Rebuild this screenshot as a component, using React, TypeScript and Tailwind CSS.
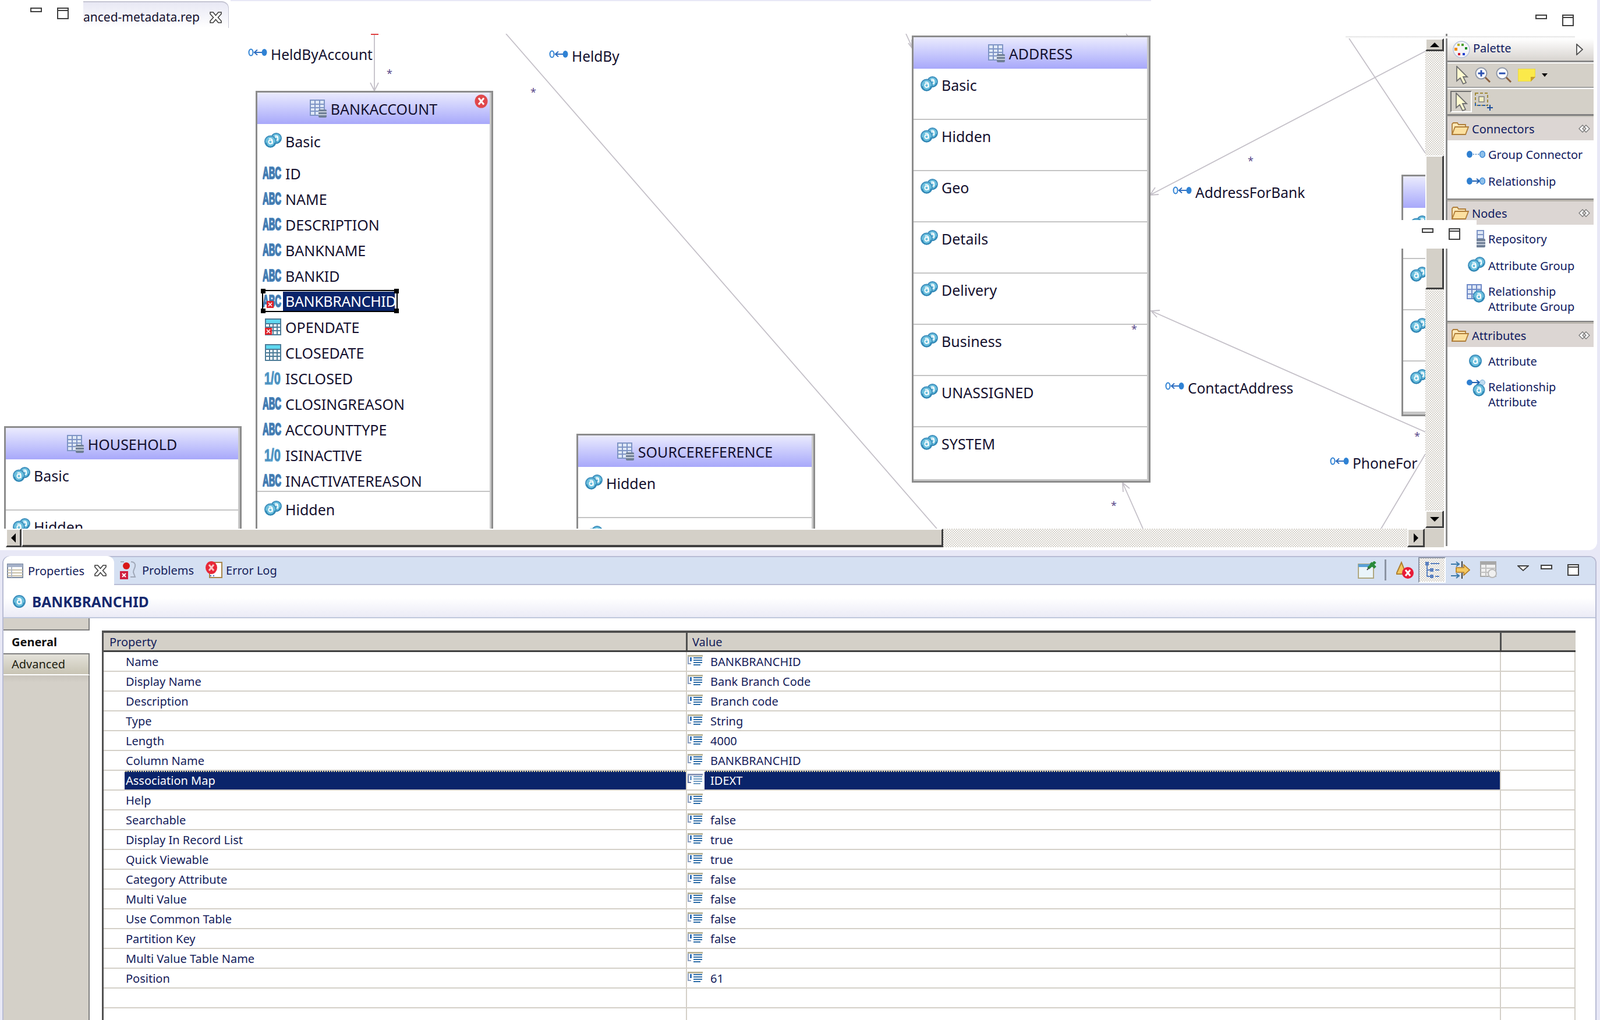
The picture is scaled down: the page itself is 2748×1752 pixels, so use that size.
import React from "react";

const B = "#3f8fbd";
const L = "#6cc0de";

function AGlyph({ x, y, s = 1 }: { x: number; y: number; s?: number }) {
  return (
    <g transform={`translate(${x} ${y}) scale(${s})`} fill="none" stroke="#fff" strokeWidth="1.7">
      <circle cx="0" cy="0.8" r="3" />
      <path d="M-2.6 -4.2 Q2.8 -5.6 3 -1.5 L3 4" />
    </g>
  );
}

function AttrCircle({ cx, cy, r }: { cx: number; cy: number; r: number }) {
  return (
    <g>
      <circle cx={cx} cy={cy} r={r} fill={L} stroke={B} strokeWidth="2" />
      <path d={`M${cx - r + 2} ${cy + 2} A${r - 2} ${r - 2} 0 0 0 ${cx + r - 2} ${cy + 2}`} fill="none" stroke="#2f86b4" strokeWidth="2" />
      <AGlyph x={cx} y={cy} s={r / 9} />
    </g>
  );
}

function GroupIcon() {
  return (
    <svg width="30" height="26" viewBox="0 0 30 26" className="-mt-[5px] shrink-0">
      <AttrCircle cx={20.5} cy={9.5} r={8.5} />
      <AttrCircle cx={10.5} cy={15} r={9.5} />
    </svg>
  );
}

function AttrIcon() {
  return (
    <svg width="32" height="24" viewBox="0 0 32 24" className="shrink-0">
      <AttrCircle cx={15} cy={12} r={10} />
    </svg>
  );
}

function AbcIcon({ bad }: { bad?: boolean }) {
  return (
    <svg width="34" height="34" viewBox="0 0 34 34" className="-my-[5px] -ml-[3px] shrink-0">
      <text x="0" y="13" transform="scale(1 2)" fontFamily="'Liberation Sans',sans-serif" fontWeight="700" fontSize="14.800" fill="#3a6c9e" stroke="#4c86bc" strokeWidth="1.100">ABC</text>
      {bad && <BadX x={7} y={16} />}
    </svg>
  );
}

function BadX({ x, y }: { x: number; y: number }) {
  return (
    <g>
      <rect x={x} y={y} width="12" height="12" fill="#e0242c" />
      <path d={`M${x + 3} ${y + 3}l6 6m0-6l-6 6`} stroke="#fff" strokeWidth="1.6" />
    </g>
  );
}

function BoolIcon() {
  return (
    <svg width="33" height="36" viewBox="0 0 33 36" className="-my-[6px] -ml-[3px] shrink-0">
      <text x="3" y="18.700" transform="scale(1 1.5)" fontFamily="'Liberation Sans',sans-serif" fontWeight="700" fontSize="20" fill="#4585b5" stroke="#5ca4d0" strokeWidth="1">1/0</text>
    </svg>
  );
}

function CalIcon({ bad }: { bad?: boolean }) {
  return (
    <svg width="33" height="30" viewBox="0 0 33 30" className="-my-[2px] -ml-[3px] -mt-[4px] shrink-0">
      <rect x="5" y="2" width="26" height="27" fill="#fff" stroke="#4d7c98" strokeWidth="2" />
      <rect x="6" y="3" width="24" height="6" fill="#5fd8f0" />
      <path d="M5 10h26M5 16h26M5 22h26M12 10v18M18 10v18M25 10v18" stroke="#4d7c98" strokeWidth="2" />
      {bad && <BadX x={4} y={17} />}
    </svg>
  );
}

function TableDbIcon() {
  return (
    <svg width="30" height="32" viewBox="0 0 30 32" className="-mt-[2px] shrink-0">
      <rect x="1" y="1" width="24" height="26" fill="#dfe8f6" stroke="#7f95c5" strokeWidth="2" />
      <path d="M1 8h24M1 14h24M1 20h24M9 1v26M17 1v26" stroke="#7f95c5" strokeWidth="2" />
      <rect x="15" y="17" width="14" height="14" rx="2" fill="#6f7f96" />
      <path d="M15 21h14M15 26h14" stroke="#dfe5ee" strokeWidth="1.6" />
    </svg>
  );
}

function RelHollow() {
  return (
    <svg width="33" height="16" viewBox="0 0 33 16" className="shrink-0">
      <ellipse cx="5" cy="8" rx="3.5" ry="5.5" fill="#fff" stroke="#2f82d4" strokeWidth="2" />
      <path d="M10 8h14M16 3.5l-5 4.5 5 4.5" stroke="#2f6ec0" strokeWidth="2" fill="none" />
      <ellipse cx="28" cy="8" rx="4.5" ry="6" fill="#2f82d4" />
    </svg>
  );
}

function RelPalette() {
  return (
    <svg width="32" height="16" viewBox="0 0 32 16" className="shrink-0">
      <ellipse cx="5" cy="8" rx="5" ry="6" fill="#2f7fd0" />
      <path d="M10 8h12M17 4l5 4-5 4" stroke="#1f5fb0" strokeWidth="2" fill="none" />
      <ellipse cx="27" cy="8" rx="4.5" ry="5.5" fill="#8ec0ea" stroke="#3f8ad8" strokeWidth="1.5" />
    </svg>
  );
}

function GroupConnIcon() {
  return (
    <svg width="32" height="16" viewBox="0 0 32 16" className="shrink-0">
      <ellipse cx="5" cy="8" rx="5" ry="6" fill="#2f7fd0" />
      <path d="M11 8h2M15 8h2M19 8h2" stroke="#3f7fc0" strokeWidth="1.5" />
      <ellipse cx="27" cy="8" rx="4.5" ry="5.5" fill="#8ec0ea" stroke="#3f8ad8" strokeWidth="1.5" />
    </svg>
  );
}

function MinIcon() {
  return <div className="h-[8px] w-[20px] shrink-0 border-2 border-[#404040] bg-white" />;
}

function MaxIcon() {
  return (
    <div className="h-[20px] w-[20px] shrink-0 border-2 border-[#404040] bg-white">
      <div className="h-[4px] border-b-2 border-[#404040]" />
    </div>
  );
}

function CloseIcon() {
  return (
    <svg width="23" height="20" viewBox="0 0 23 20" className="shrink-0">
      <path d="M2 1h5l4.500 5.500L16 1h5v3l-5.500 6 5.500 6v3h-5l-4.500-5.500L7 19H2v-3l5.500-6L2 4z" fill="#fff" stroke="#3c3c3c" strokeWidth="1.6" />
    </svg>
  );
}

function ErrorBadge() {
  return (
    <svg width="23" height="24" viewBox="0 0 23 24">
      <ellipse cx="11.500" cy="12" rx="11" ry="11.500" fill="#e0484c" />
      <path d="M7 6.500l9 11m0-11l-9 11" stroke="#fff" strokeWidth="3" />
    </svg>
  );
}

function Folder() {
  return (
    <svg width="30" height="24" viewBox="0 0 30 24" className="shrink-0">
      <path d="M1 22V4l2-2h7l2 3h12v4" fill="#fbe8b8" stroke="#b07e3a" strokeWidth="1.8" />
      <path d="M1 22l5-13h23l-5 13z" fill="#fce0a0" stroke="#b07e3a" strokeWidth="1.8" />
    </svg>
  );
}

function Collapse() {
  return (
    <svg width="20" height="14" viewBox="0 0 20 14" className="shrink-0">
      <path d="M7 1L1 7l6 6 3-3-3-3 3-3zM13 1l6 6-6 6-3-3 3-3-3-3z" fill="#fff" stroke="#777" strokeWidth="1.3" />
    </svg>
  );
}

function PaletteIcon() {
  return (
    <svg width="30" height="30" viewBox="0 0 30 30" className="shrink-0">
      <circle cx="15" cy="15" r="14" fill="#f4f4f8" stroke="#b8c4dc" strokeWidth="1.5" />
      <rect x="8" y="5" width="4" height="4" fill="#b8b020" />
      <rect x="15" y="5" width="4" height="4" fill="#4aa030" />
      <rect x="3" y="12" width="5" height="5" fill="#f08a10" />
      <rect x="21" y="11" width="4" height="4" fill="#108a20" />
      <rect x="9" y="21" width="4" height="4" fill="#d02030" />
      <rect x="17" y="21" width="4" height="4" fill="#2040d0" />
    </svg>
  );
}

function Cursor() {
  return (
    <svg width="22" height="32" viewBox="0 0 22 32" className="shrink-0">
      <path d="M2 1v25l6-5 5 10 5-2-5-10h7z" fill="#fffbd0" stroke="#707070" strokeWidth="1.8" />
    </svg>
  );
}

function Zoom({ plus }: { plus?: boolean }) {
  return (
    <svg width="28" height="28" viewBox="0 0 28 28" className="shrink-0">
      <circle cx="11" cy="11" r="9.500" fill="#fff" stroke="#9098a8" strokeWidth="2" />
      <path d="M18 18l8 8" stroke="#8a6040" strokeWidth="3" />
      <path d={plus ? "M5.500 11h11M11 5.500v11" : "M5.500 11h11"} stroke="#2a50b0" strokeWidth="3" />
    </svg>
  );
}

function Note() {
  return (
    <svg width="30" height="22" viewBox="0 0 30 22" className="shrink-0">
      <path d="M0 0h30v14l-8 8H0z" fill="#fbe94a" stroke="#d8c840" strokeWidth="1" />
      <path d="M30 14h-8v8z" fill="#c8a030" />
    </svg>
  );
}

function Marquee() {
  return (
    <svg width="32" height="32" viewBox="0 0 32 32" className="shrink-0">
      <rect x="1" y="1" width="21" height="21" fill="none" stroke="#a08a3a" strokeWidth="2" strokeDasharray="5 3" />
      <path d="M1 18v4h21" fill="none" stroke="#2a60a8" strokeWidth="2" strokeDasharray="5 3" />
      <rect x="7" y="7" width="9" height="9" fill="#f4f0c0" stroke="#808080" strokeWidth="1.5" />
      <path d="M26 21v10M21 26h10" stroke="#1f4f9a" strokeWidth="2" />
    </svg>
  );
}

function Repo() {
  return (
    <svg width="32" height="30" viewBox="0 0 32 30" className="shrink-0">
      <path d="M18 1h11v14H18zM18 8h11" fill="#dfe8f6" stroke="#7f95c5" strokeWidth="2" />
      <rect x="16" y="15" width="16" height="15" rx="2" fill="#6f7f96" />
      <path d="M16 20h16M16 25h16" stroke="#dfe5ee" strokeWidth="1.600" />
    </svg>
  );
}

function RelAttrGroup() {
  return (
    <svg width="32" height="32" viewBox="0 0 32 32" className="shrink-0">
      <rect x="1" y="1" width="24" height="24" fill="#dfe8f6" stroke="#6f8ac8" strokeWidth="2" />
      <path d="M1 9h24M1 17h24M9 1v24M17 1v24" stroke="#6f8ac8" strokeWidth="2" />
      <AttrCircle cx={21} cy={21} r={9.500} />
    </svg>
  );
}

function RelAttr() {
  return (
    <svg width="32" height="30" viewBox="0 0 32 30" className="shrink-0">
      <circle cx="5" cy="5" r="5" fill="#2f7fd0" />
      <path d="M9 5h14M17 1l5 4-5 4" stroke="#1f5fb0" strokeWidth="2" fill="none" />
      <circle cx="27" cy="5" r="4.500" fill="#c0dcf0" stroke="#7ab0d8" />
      <AttrCircle cx={21} cy={18} r={9.500} />
    </svg>
  );
}

function PropIcon({ dim }: { dim?: boolean }) {
  return (
    <svg width="26" height="19" viewBox="0 0 26 19" className={dim ? "shrink-0 -mt-[4px] opacity-70" : "shrink-0 -mt-[4px]"}>
      <rect x="0" y="0" width="26" height="3" fill={dim ? "#5a6a9a" : "#b9b498"} />
      <path d="M1 3v12h5" fill="none" stroke={dim ? "#26407e" : "#8a9ec0"} strokeWidth="2" />
      <rect x="4" y="4" width="3" height="7" fill="#2f70b8" />
      <path d="M10 5h15M10 9h15M10 13h15M10 17h12" stroke="#2f6ea8" strokeWidth="2" />
    </svg>
  );
}

function GroupRow({ label }: { label: string }) {
  return (
    <div className="flex h-[26px] items-center gap-[6px] pl-[12px]">
      <GroupIcon />
      <span className="pt-[2px]">{label}</span>
    </div>
  );
}

function Section({ label }: { label: string }) {
  return (
    <div className="h-[88px] border-b-2 border-[#c4c4c4] pt-[15px]">
      <GroupRow label={label} />
    </div>
  );
}

function FieldRow({ icon, label }: { icon: React.ReactNode; label: string }) {
  return (
    <div className="flex h-[44px] items-center gap-[6px] pl-[12px]">
      <div className="flex w-[30px] shrink-0 items-center">{icon}</div>
      <span className="pt-[1px]">{label}</span>
    </div>
  );
}

function Node({ pos, title, children, badge }: { pos: string; title?: string; children: React.ReactNode; badge?: boolean }) {
  return (
    <div className={`absolute border-[3px] border-[#8c8c8c] bg-white text-[25px] text-[#14102e] ${pos}`}>
      <div className="relative h-full border-r-[3px] border-b-[3px] border-[#c8c8c8]">
        <div className="flex h-[54px] items-center justify-center gap-[6px] bg-linear-to-b from-[#ebebfd] to-[#a8a8fa] pt-[4px]">
          {title && <TableDbIcon />}
          {title && <span>{title}</span>}
        </div>
        {badge && (
          <div className="absolute top-[3px] right-[3px]">
            <ErrorBadge />
          </div>
        )}
        {children}
      </div>
    </div>
  );
}

function Label({ pos, text }: { pos: string; text: string }) {
  return (
    <div className={`absolute flex h-[26px] items-center gap-[6px] text-[24.5px] text-[#14102e] ${pos}`}>
      <div className="-mt-[6px]">
        <RelHollow />
      </div>
      <span className="pt-[2px]">{text}</span>
    </div>
  );
}

function Star({ pos }: { pos: string }) {
  return <span className={`absolute text-[18px] leading-[24px] text-[#5a4a8a] ${pos}`}>*</span>;
}

function Bevel({ dir, cls }: { dir: "up" | "down" | "left" | "right"; cls: string }) {
  const p = { up: "M8 0l8 8H0z", down: "M0 0h16l-8 8z", left: "M8 0v16L0 8z", right: "M0 0l8 8-8 8z" }[dir];
  const small = dir === "up" || dir === "down";
  return (
    <div className={`flex shrink-0 items-center justify-center border-t-2 border-l-2 border-t-white border-l-white border-r-[3px] border-b-[3px] border-r-[#404040] border-b-[#404040] bg-[#d4d0c8] ${cls}`}>
      <svg width={small ? 16 : 8} height={small ? 8 : 16} viewBox={small ? "0 0 16 8" : "0 0 8 16"}>
        <path d={p} fill="#000" />
      </svg>
    </div>
  );
}

const dither = "bg-[image:repeating-conic-gradient(#d4d0c8_0%_25%,#ffffff_0%_50%)] bg-[length:4px_4px]";

function PaletteHead({ label }: { label: string }) {
  return (
    <div className="flex h-[40px] shrink-0 items-center bg-[#dcd6d3] pr-[6px] pl-[7px] text-[#101a60]">
      <Folder />
      <span className="ml-[5px] pt-[2px]">{label}</span>
      <div className="ml-auto">
        <Collapse />
      </div>
    </div>
  );
}

function PaletteItem({ icon, lines }: { icon: React.ReactNode; lines: string[] }) {
  return lines.length === 1 ? (
    <div className="flex h-[46px] items-center text-[#101a60]">
      <div className="flex w-[65px] shrink-0 justify-end">{icon}</div>
      <span className="ml-[5px] pt-[1px]">{lines[0]}</span>
    </div>
  ) : (
    <div className="flex pt-[9px] leading-[26px] text-[#101a60]">
      <div className="flex w-[65px] shrink-0 justify-end">{icon}</div>
      <div className="ml-[5px]">
        <div>{lines[0]}</div>
        <div>{lines[1]}</div>
      </div>
    </div>
  );
}

const rows: [string, string][] = [
  ["Name", "BANKBRANCHID"],
  ["Display Name", "Bank Branch Code"],
  ["Description", "Branch code"],
  ["Type", "String"],
  ["Length", "4000"],
  ["Column Name", "BANKBRANCHID"],
  ["Association Map", "IDEXT"],
  ["Help", ""],
  ["Searchable", "false"],
  ["Display In Record List", "true"],
  ["Quick Viewable", "true"],
  ["Category Attribute", "false"],
  ["Multi Value", "false"],
  ["Use Common Table", "false"],
  ["Partition Key", "false"],
  ["Multi Value Table Name", ""],
  ["Position", "61"],
];

const fields: [string, string][] = [
  ["abc", "ID"],
  ["abc", "NAME"],
  ["abc", "DESCRIPTION"],
  ["abc", "BANKNAME"],
  ["abc", "BANKID"],
  ["sel", "BANKBRANCHID"],
  ["calbad", "OPENDATE"],
  ["cal", "CLOSEDATE"],
  ["bool", "ISCLOSED"],
  ["abc", "CLOSINGREASON"],
  ["abc", "ACCOUNTTYPE"],
  ["bool", "ISINACTIVE"],
  ["abc", "INACTIVATEREASON"],
];

function Handle({ pos }: { pos: string }) {
  return <div className={`absolute h-[8px] w-[8px] bg-black ${pos}`} />;
}

export default function App() {
  return (
    <div className="relative flex h-[1752px] w-[2748px] flex-col overflow-hidden bg-[#e8e8f6] [font-family:'DejaVu_Sans_Condensed','Liberation_Sans',sans-serif]">
      {/* editor area */}
      <div className="mr-[5px] flex h-[945px] shrink-0 flex-col rounded-br-[14px] bg-white">
        <div className="relative flex h-[58px] shrink-0 items-start">
          <div className="absolute top-0 left-[396px] h-[2px] w-[1581px] bg-[#e8e8f6]" />
          <div className="flex w-[143px] shrink-0 gap-[26px] pt-[13px] pl-[52px]">
            <MinIcon />
            <MaxIcon />
          </div>
          <div className="mt-[2px] flex h-[46px] w-[250px] items-center gap-[16px] rounded-tr-[12px] border-t-2 border-r border-[#c4c4d2] bg-linear-to-b from-[#e8e8f4] to-white pt-[8px] text-[21px] text-[#14102e]">
            <span>anced-metadata.rep</span>
            <CloseIcon />
          </div>
          <div className="ml-auto flex gap-[26px] pt-[25px] pr-[40px]">
            <MinIcon />
            <MaxIcon />
          </div>
          <div className="absolute top-[62px] left-[2311px] z-10 h-[4px] w-[394px] bg-linear-to-b from-[#e4e4e4] to-white" />
        </div>

        <div className="flex min-h-0 flex-1">
          <div className="flex w-[2480px] shrink-0 flex-col">
            <div className="flex h-[850px] shrink-0">
              {/* free canvas */}
              <div className="relative w-[2448px] shrink-0 overflow-hidden">
                <svg width="2448" height="850" viewBox="0 58 2448 850" className="absolute top-0 left-0" fill="none" stroke="#c4c0c8" strokeWidth="1.800">
                  <path d="M643 58V156M636 142l7 14 7-14" />
                  <path d="M637 59h13" stroke="#e04040" strokeWidth="2" />
                  <path d="M869 58L1609 908" />
                  <path d="M1556 58l11 24M1566 68v14l-6-8" />
                  <path d="M1934 58l3 4" />
                  <path d="M1975 335L2448 88M1990 334l-15 1 9-13" />
                  <path d="M2317 66L2448 263" />
                  <path d="M1977 534L2448 742M1992 533l-15 1 10 11" />
                  <path d="M2448 780L2372 908" />
                  <path d="M1928 829L1963 908M1929 845l-1-16 12 10" />
                </svg>

                <Node pos="top-[98px] left-[439px] h-[900px] w-[408px]" title="BANKACCOUNT" badge>
                  <div className="pt-[17px]">
                    <GroupRow label="Basic" />
                  </div>
                  <div className="mt-[20px] h-[569px] border-b-2 border-[#c4c4c4]">
                    {fields.map(([k, t]) =>
                      k === "sel" ? (
                        <div key={t} className="relative flex h-[44px] items-center gap-[6px] pl-[12px]">
                          <div className="flex w-[30px] shrink-0 items-center">
                            <AbcIcon bad />
                          </div>
                          <span className="-ml-[4px] flex h-[34px] w-[192px] shrink-0 items-center bg-[#0a246a] pl-[4px] tracking-[-0.35px] text-white">{t}</span>
                          <div className="absolute top-[2px] left-[13px] h-[2px] w-[223px] bg-black" />
                          <div className="absolute top-[38px] left-[13px] h-[2px] w-[223px] bg-black" />
                          <div className="absolute top-[6px] left-[8px] h-[32px] w-[2px] bg-black" />
                          <div className="absolute top-[6px] left-[239px] h-[32px] w-[2px] bg-black" />
                          <Handle pos="top-0 left-[6px]" />
                          <Handle pos="top-0 left-[235px]" />
                          <Handle pos="top-[34px] left-[6px]" />
                          <Handle pos="top-[34px] left-[235px]" />
                        </div>
                      ) : (
                        <FieldRow
                          key={t}
                          label={t}
                          icon={k === "abc" ? <AbcIcon /> : k === "bool" ? <BoolIcon /> : <CalIcon bad={k === "calbad"} />}
                        />
                      ),
                    )}
                  </div>
                  <div className="pt-[17px]">
                    <GroupRow label="Hidden" />
                  </div>
                </Node>

                <Node pos="top-[674px] left-[7px] h-[300px] w-[408px]" title="HOUSEHOLD">
                  <Section label="Basic" />
                  <Section label="Hidden" />
                </Node>

                <Node pos="top-[687px] left-[990px] h-[300px] w-[410px]" title="SOURCEREFERENCE">
                  <Section label="Hidden" />
                  <Section label="" />
                </Node>

                <Node pos="top-[3px] left-[1566px] h-[768px] w-[410px]" title="ADDRESS">
                  <Section label="Basic" />
                  <Section label="Hidden" />
                  <Section label="Geo" />
                  <Section label="Details" />
                  <Section label="Delivery" />
                  <Section label="Business" />
                  <Section label="UNASSIGNED" />
                  <div className="pt-[15px]">
                    <GroupRow label="SYSTEM" />
                  </div>
                </Node>

                <Node pos="top-[242px] left-[2407px] h-[415px] w-[200px]">
                  <Section label="" />
                  <Section label="" />
                  <Section label="" />
                  <Section label="" />
                </Node>

                <Label pos="top-[22px] left-[426px]" text="HeldByAccount" />
                <Label pos="top-[25px] left-[943px]" text="HeldBy" />
                <Label pos="top-[259px] left-[2014px]" text="AddressForBank" />
                <Label pos="top-[595px] left-[2001px]" text="ContactAddress" />
                <Label pos="top-[724px] left-[2284px]" text="PhoneFor" />

                <Star pos="top-[56px] left-[664px]" />
                <Star pos="top-[88px] left-[911px]" />
                <Star pos="top-[206px] left-[2143px]" />
                <Star pos="top-[495px] left-[1943px]" />
                <Star pos="top-[679px] left-[2429px]" />
                <Star pos="top-[798px] left-[1908px]" />
              </div>

              {/* vertical scrollbar */}
              <div className="flex w-[32px] shrink-0 flex-col pb-[1px]">
                <div className="h-[8px] shrink-0 bg-white" />
                <Bevel dir="up" cls="h-[22px]" />
                <div className={`h-[179px] shrink-0 ${dither}`} />
                <div className="h-[230px] shrink-0 border-t-2 border-l-2 border-t-white border-l-white border-r-[3px] border-b-[3px] border-r-[#404040] border-b-[#404040] bg-[#d4d0c8]" />
                <div className={`min-h-0 flex-1 ${dither}`} />
                <Bevel dir="down" cls="h-[30px]" />
              </div>
            </div>

            {/* horizontal scrollbar */}
            <div className="flex h-[32px] shrink-0 pl-[10px]">
              <Bevel dir="left" cls="h-full w-[27px]" />
              <div className="h-full w-[1583px] shrink-0 border-t-2 border-l-2 border-t-white border-l-white border-r-[3px] border-b-[4px] border-r-[#404040] border-b-[#404040] bg-[#d4d0c8]" />
              <div className={`h-full min-w-0 flex-1 ${dither}`} />
              <Bevel dir="right" cls="h-full w-[30px]" />
              <div className="h-full w-[33px] shrink-0 bg-[#d4d0c8]" />
            </div>
          </div>

          <div className="h-[880px] w-[6px] shrink-0 border-r-[3px] border-[#8a8a8a] bg-white" />

          {/* palette */}
          <div className="flex w-[251px] shrink-0 flex-col text-[20px]">
            <div className="h-[8px] shrink-0" />
            <div className="flex h-[38px] shrink-0 items-center bg-linear-to-b from-white to-[#d8d4d0] pr-[18px] pl-[9px] text-[#101a60]">
              <PaletteIcon />
              <span className="ml-[5px] -mt-[4px]">Palette</span>
              <svg width="12" height="20" viewBox="0 0 12 20" className="ml-auto">
                <path d="M1 1l10 9-10 9z" fill="#fff" stroke="#505050" strokeWidth="1.800" />
              </svg>
            </div>
            <div className="h-[3px] shrink-0 bg-[#8a8a8a]" />
            <div className="h-[2px] shrink-0" />
            <div className="flex h-[42px] shrink-0 items-center gap-[11px] border-b-2 border-[#a0a0a0] bg-[#d4d0c8] pl-[14px]">
              <Cursor />
              <Zoom plus />
              <div className="-ml-[3px]">
                <Zoom />
              </div>
              <div className="-ml-[1px]">
                <Note />
              </div>
              <svg width="10" height="6" viewBox="0 0 10 6" className="ml-0">
                <path d="M0 0h10L5 6z" fill="#000" />
              </svg>
            </div>
            <div className="h-[2px] shrink-0" />
            <div className="flex h-[43px] shrink-0 items-center gap-[5px] bg-[#d4d0c8] pl-[5px]">
              <div className="flex h-[37px] w-[37px] items-center justify-center border-t-2 border-l-2 border-t-[#707070] border-l-[#707070] border-r-2 border-b-2 border-r-white border-b-white">
                <Cursor />
              </div>
              <Marquee />
            </div>
            <div className="h-[3px] shrink-0 bg-[#808080]" />
            <div className="h-[2px] shrink-0 bg-[#c8c4bc]" />
            <PaletteHead label="Connectors" />
            <div className="h-[100px] shrink-0 pt-[1px]">
              <PaletteItem icon={<GroupConnIcon />} lines={["Group Connector"]} />
              <PaletteItem icon={<RelPalette />} lines={["Relationship"]} />
            </div>
            <div className="h-[2px] shrink-0 bg-[#808080]" />
            <div className="h-[3px] shrink-0 bg-[#b8b4ac]" />
            <PaletteHead label="Nodes" />
            <div className="h-[165px] shrink-0 pt-[1px]">
              <PaletteItem icon={<Repo />} lines={["Repository"]} />
              <PaletteItem icon={<GroupIcon />} lines={["Attribute Group"]} />
              <PaletteItem icon={<RelAttrGroup />} lines={["Relationship", "Attribute Group"]} />
            </div>
            <div className="h-[2px] shrink-0 bg-[#808080]" />
            <div className="h-[3px] shrink-0 bg-[#b8b4ac]" />
            <PaletteHead label="Attributes" />
            <div className="pt-[1px]">
              <PaletteItem icon={<AttrIcon />} lines={["Attribute"]} />
              <PaletteItem icon={<RelAttr />} lines={["Relationship", "Attribute"]} />
            </div>
          </div>
        </div>
      </div>

      {/* properties view */}
      <div className="mt-[10px] mr-[6px] ml-[4px] flex min-h-0 flex-1 flex-col rounded-t-[12px] border-x-2 border-t-2 border-[#b8bcd4] bg-white text-[20px] text-[#14205a]">
        <div className="flex h-[48px] shrink-0 items-end rounded-t-[10px] border-b-2 border-[#b8bcd4] bg-[#d5e0f2]">
          <div className="-mb-[2px] flex h-[50px] w-[190px] shrink-0 items-center rounded-t-[12px] bg-white pl-[6px]">
            <svg width="28" height="25" viewBox="0 0 28 25" className="shrink-0">
              <rect x="1" y="1" width="26" height="23" fill="#fff" stroke="#7a88a0" strokeWidth="2" />
              <rect x="1" y="1" width="26" height="5" fill="#a4b0c8" />
              <path d="M1 11h26M1 16h26M1 21h26" stroke="#c8c0a8" strokeWidth="2" />
              <path d="M8 6v18" stroke="#b0b8c8" strokeWidth="2" />
            </svg>
            <span className="ml-[8px] pt-[2px]">Properties</span>
            <div className="ml-auto pr-[12px]">
              <CloseIcon />
            </div>
          </div>
          <div className="flex h-[48px] items-center pl-[9px]">
            <svg width="30" height="32" viewBox="0 0 30 32" className="shrink-0">
              <rect x="1" y="18" width="14" height="14" fill="#d02040" />
              <path d="M5 22l6 6m0-6l-6 6" stroke="#fff" strokeWidth="2" />
              <circle cx="12" cy="9" r="6" fill="#d81818" />
              <path d="M2 2h6M20 2c6 0 8 4 7 8s-3 6-3 10l3 8h-8" fill="none" stroke="#a0a8b8" strokeWidth="2" />
            </svg>
            <span className="ml-[9px] pt-[2px]">Problems</span>
            <svg width="30" height="32" viewBox="0 0 30 32" className="ml-[19px] shrink-0">
              <rect x="8" y="3" width="21" height="26" fill="#fff" stroke="#a8864a" strokeWidth="2" />
              <ellipse cx="11" cy="12" rx="10" ry="11" fill="#e82838" />
              <path d="M7 7l8 10m0-10l-8 10" stroke="#f8c8c8" strokeWidth="3" />
              <path d="M9 26h2M14 26h2" stroke="#4070c0" strokeWidth="2" />
            </svg>
            <span className="ml-[6px] pt-[2px]">Error Log</span>
          </div>
          <div className="ml-auto flex h-[48px] items-center pr-[28px]">
            <svg width="32" height="30" viewBox="0 0 32 30" className="shrink-0">
              <rect x="1" y="5" width="26" height="24" fill="#eaf4fa" stroke="#b0a880" strokeWidth="2" />
              <rect x="1" y="5" width="26" height="5" fill="#5aa0d8" />
              <path d="M18 12L30 1M22 3l8 8" stroke="#2a8a3a" strokeWidth="5" />
              <path d="M19 11l-3 4" stroke="#404040" strokeWidth="2" />
            </svg>
            <div className="ml-[14px] h-[36px] w-[3px] bg-[#8c94a4]" />
            <svg width="30" height="30" viewBox="0 0 30 30" className="ml-[17px] shrink-0">
              <path d="M9 2l8 20H0z" fill="#f2c860" stroke="#b08030" strokeWidth="2" />
              <circle cx="20" cy="20" r="10" fill="#e81c38" />
              <path d="M16 15l8 10m0-10l-8 10" stroke="#fff" strokeWidth="3" />
            </svg>
            <div className={`ml-[8px] flex h-[44px] w-[47px] items-center justify-center border-t-2 border-l-2 border-t-[#8c94a4] border-l-[#8c94a4] border-r-2 border-b-2 border-r-white border-b-white ${dither}`}>
              <svg width="24" height="28" viewBox="0 0 24 28">
                <rect x="0" y="0" width="6" height="6" fill="#5a80c0" />
                <rect x="8" y="11" width="6" height="6" fill="#5a80c0" />
                <rect x="8" y="22" width="6" height="6" fill="#5a80c0" />
                <path d="M3 6v19h5M3 14h5M9 3h15M17 14h7M17 25h7" fill="none" stroke="#5a80c0" strokeWidth="2" />
              </svg>
            </div>
            <svg width="33" height="30" viewBox="0 0 33 30" className="ml-[9px] shrink-0">
              <path d="M0 5h14M9 1l5 4-5 4M0 25h14M9 21l5 4-5 4" fill="none" stroke="#3a78a8" strokeWidth="2" />
              <path d="M19 0v10M19 20v10" stroke="#404040" strokeWidth="2" />
              <path d="M9 11h13V6l10 9-10 9v-5H9z" fill="#f4c860" stroke="#b07820" strokeWidth="1.600" />
            </svg>
            <svg width="30" height="30" viewBox="0 0 30 30" className="ml-[17px] shrink-0">
              <rect x="1" y="1" width="26" height="25" fill="#f0f0f0" stroke="#a8a8a8" strokeWidth="2" />
              <rect x="1" y="1" width="26" height="5" fill="#a8a8a8" />
              <path d="M1 12h26M1 19h26M10 6v20" stroke="#c0c0c0" strokeWidth="2" />
              <circle cx="21" cy="21" r="7" fill="#f0f0f0" stroke="#b8b8b8" strokeWidth="2" />
            </svg>
            <svg width="20" height="10" viewBox="0 0 20 10" className="ml-[34px] shrink-0 -mt-[6px]">
              <path d="M1 1h18L10 9z" fill="#fff" stroke="#404040" strokeWidth="1.800" />
            </svg>
            <div className="ml-[20px] -mt-[10px]">
              <MinIcon />
            </div>
            <div className="ml-[26px]">
              <MaxIcon />
            </div>
          </div>
        </div>

        <div className="flex h-[57px] shrink-0 items-center border-b-2 border-[#c0c8dc] bg-linear-to-b from-white from-40% to-[#ebebf6] pl-[12px]">
          <AttrIcon />
          <span className="ml-[5px] pt-[4px] text-[24.5px] font-bold text-[#14286e]">BANKBRANCHID</span>
        </div>

        <div className="flex min-h-0 flex-1">
          <div className="flex w-[148px] shrink-0 flex-col bg-[#d4d0c8]">
            <div className="h-[21px] shrink-0 border-r-2 border-b-2 border-[#808080]" />
            <div className="flex h-[39px] shrink-0 items-center bg-white pl-[14px] font-bold text-[#101010]">General</div>
            <div className="flex h-[38px] shrink-0 items-center border-t-2 border-r-2 border-b-2 border-t-[#808080] border-r-[#808080] border-b-white bg-linear-to-b from-[#e4e2da] to-[#c8c4b4] pl-[14px] text-[#202010]">Advanced</div>
            <div className="min-h-0 flex-1 border-r-2 border-[#808080] bg-linear-to-b from-[#c8c4bc] from-0% to-[#d4d0c8] to-2%" />
          </div>

          <div className="mt-[21px] ml-[21px] flex w-[2531px] shrink-0 flex-col overflow-hidden border-t-[4px] border-l-[3px] border-[#505050] text-[20px]">
            <div className="flex h-[33px] shrink-0 border-b-[3px] border-[#404040] bg-[#d4d0c8]">
              <div className="flex w-[1000px] shrink-0 items-center pt-[2px] pl-[10px]">Property</div>
              <div className="flex w-[1398px] shrink-0 items-center border-l-[3px] border-l-[#505050] pt-[2px] pl-[8px]">Value</div>
              <div className="flex-1 border-l-[3px] border-l-[#505050]" />
            </div>
            {rows.map(([name, val]) => {
              const sel = name === "Association Map";
              return (
                <div key={name} className="flex h-[34px] shrink-0 border-b-2 border-[#d4d0c8]">
                  <div className="flex w-[1000px] shrink-0 pl-[36px]">
                    <div className={sel ? "flex flex-1 items-center border-t-2 border-dotted border-t-[#f0e0a0] bg-[#0a246a] pl-[2px] text-white" : "flex flex-1 items-center pt-[2px] pl-[2px]"}>{name}</div>
                  </div>
                  <div className="flex w-[1398px] shrink-0 border-l-2 border-[#d4d0c8]">
                    <div className="flex w-[30px] shrink-0 items-center pl-[1px]">
                      <PropIcon dim={sel} />
                    </div>
                    <div className={sel ? "flex flex-1 items-center border-t-2 border-dotted border-t-[#f0e0a0] bg-[#0a246a] pl-[10px] text-white" : "flex flex-1 items-center pt-[2px] pl-[10px]"}>{val}</div>
                  </div>
                  <div className="flex-1 border-x-2 border-[#d4d0c8]" />
                </div>
              );
            })}
            <div className="flex h-[34px] shrink-0 border-b-2 border-[#d4d0c8]">
              <div className="w-[1000px] shrink-0" />
              <div className="w-[1398px] shrink-0 border-l-2 border-[#d4d0c8]" />
              <div className="flex-1 border-x-2 border-[#d4d0c8]" />
            </div>
            <div className="flex min-h-0 flex-1">
              <div className="w-[1000px] shrink-0" />
              <div className="w-[1398px] shrink-0 border-l-2 border-[#d4d0c8]" />
              <div className="flex-1 border-x-2 border-[#d4d0c8]" />
            </div>
          </div>
        </div>
      </div>

      {/* stray window buttons painted over the diagram */}
      <div className="absolute top-[378px] left-[2407px] flex h-[49px] w-[129px] gap-[26px] bg-white pt-[14px] pl-[35px]">
        <MinIcon />
        <MaxIcon />
      </div>
    </div>
  );
}
